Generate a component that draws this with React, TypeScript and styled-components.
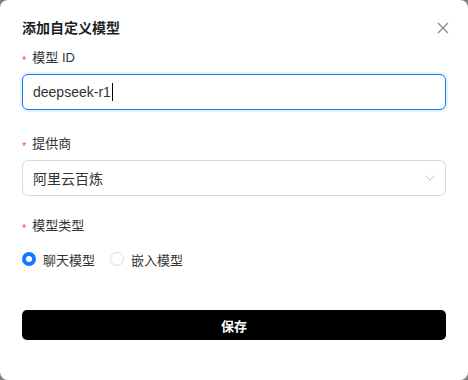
import React from "react";
import styled, { createGlobalStyle } from "styled-components";

const Global = createGlobalStyle`
  html, body { margin: 0; padding: 0; background: #808080; }
  body { font-family: "Liberation Sans", "Noto Sans CJK SC", sans-serif; }
  * { box-sizing: border-box; }
`;

const Dialog = styled.div`
  width: 468px;
  height: 380px;
  background: #fff;
  border-radius: 8px;
  padding: 18px 22px 0 22px;
  display: flex;
  flex-direction: column;
`;

const Header = styled.div`
  display: flex;
  align-items: center;
  justify-content: space-between;
  height: 20px;
  margin-bottom: 8px;
`;

const Title = styled.h2`
  margin: 0;
  font-size: 14px;
  font-weight: 700;
  line-height: 20px;
  color: #1f1f1f;
`;

const CloseBtn = styled.button`
  border: 0;
  background: none;
  padding: 0;
  margin-right: -3px;
  width: 12px;
  height: 12px;
  display: flex;
  align-items: center;
  justify-content: center;
  cursor: pointer;
`;

const Item = styled.div<{ $gap: number }>`
  display: flex;
  flex-direction: column;
  margin-bottom: ${(p) => p.$gap}px;
`;

const Label = styled.label`
  display: flex;
  align-items: center;
  height: 20px;
  font-size: 13px;
  color: #333;
  margin-bottom: 8px;
`;

const Required = styled.span`
  display: inline-flex;
  align-items: center;
  height: 20px;
  padding-top: 8px;
  color: #ff4d4f;
  font-size: 11px;
  margin-right: 6px;
`;

const Field = styled.div<{ $focused?: boolean }>`
  height: 36px;
  border: 1px solid ${(p) => (p.$focused ? "#1677ff" : "#d9d9d9")};
  border-radius: 6px;
  padding: 0 10px;
  display: flex;
  align-items: center;
  font-size: 14px;
  color: #333;
  background: #fff;
  box-shadow: ${(p) => (p.$focused ? "0 0 0 2px rgba(5,145,255,0.1)" : "none")};
`;

const Value = styled.span`
  flex: 1;
  display: flex;
  align-items: center;
`;

const Caret = styled.span`
  display: inline-block;
  width: 1px;
  height: 18px;
  background: #000;
  margin-left: 1px;
`;

const RadioRow = styled.div`
  display: flex;
  align-items: center;
  height: 34px;
  gap: 15px;
`;

const RadioItem = styled.label`
  display: flex;
  align-items: center;
  gap: 7px;
  font-size: 13px;
  color: #333;
`;

const RadioDot = styled.span<{ $checked?: boolean }>`
  width: 14px;
  height: 14px;
  border-radius: 50%;
  border: ${(p) => (p.$checked ? "4px solid #1677ff" : "1px solid #d9d9d9")};
  background: #fff;
`;

const SaveButton = styled.button`
  margin-top: 34px;
  height: 30px;
  width: 100%;
  border: 0;
  border-radius: 5px;
  background: #000;
  color: #fff;
  font-size: 13px;
  font-weight: 700;
  font-family: "Liberation Sans", "Noto Sans CJK SC", sans-serif;
  cursor: pointer;
`;

export default function App() {
  return (
    <>
      <Global />
      <Dialog>
        <Header>
          <Title>添加自定义模型</Title>
          <CloseBtn aria-label="close">
            <svg width="12" height="12" viewBox="0 0 12 12">
              <path d="M1 1 L11 11 M11 1 L1 11" stroke="#8a8a8a" strokeWidth="1.3" fill="none" />
            </svg>
          </CloseBtn>
        </Header>

        <Item $gap={22}>
          <Label>
            <Required>*</Required>模型 ID
          </Label>
          <Field $focused>
            <Value>
              deepseek-r1
              <Caret />
            </Value>
          </Field>
        </Item>

        <Item $gap={18}>
          <Label>
            <Required>*</Required>提供商
          </Label>
          <Field>
            <Value>阿里云百炼</Value>
            <svg width="10" height="6" viewBox="0 0 10 6">
              <path d="M0.5 0.5 L5 5.3 L9.5 0.5" stroke="#bfbfbf" strokeWidth="1" fill="none" />
            </svg>
          </Field>
        </Item>

        <Item $gap={0}>
          <Label>
            <Required>*</Required>模型类型
          </Label>
          <RadioRow>
            <RadioItem>
              <RadioDot $checked />
              聊天模型
            </RadioItem>
            <RadioItem>
              <RadioDot />
              嵌入模型
            </RadioItem>
          </RadioRow>
        </Item>

        <SaveButton>保存</SaveButton>
      </Dialog>
    </>
  );
}
